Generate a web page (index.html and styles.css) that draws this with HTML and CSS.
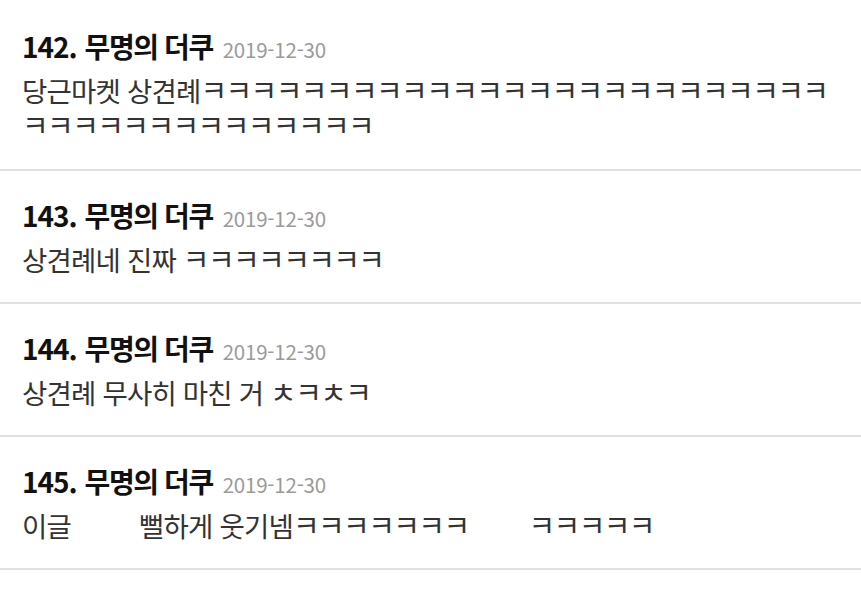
FILE: index.html
```html
<!DOCTYPE html>
<html lang="ko">
    <head>
        <meta charset="utf-8">
        <title>댓글</title>
        <meta name="viewport" content="width=device-width, initial-scale=1">
        <link rel="stylesheet" href="styles.css">
    </head>
    <body>
        <ul class="comments">
            <li class="comment first">
                <p class="meta"><b>142.</b> <strong>무명의 더쿠</strong> <span class="date">2019-12-30</span></p>
                <p class="text">당근마켓 상견례<span class="lol">ㅋㅋㅋㅋㅋㅋㅋㅋㅋㅋㅋㅋㅋㅋㅋㅋㅋㅋㅋㅋㅋㅋㅋㅋㅋㅋㅋㅋㅋㅋㅋㅋㅋㅋㅋㅋㅋㅋㅋ</span></p>
            </li>
            <li class="comment">
                <p class="meta"><b>143.</b> <strong>무명의 더쿠</strong> <span class="date">2019-12-30</span></p>
                <p class="text">상견례네 진짜 <span class="lol">ㅋㅋㅋㅋㅋㅋㅋㅋ</span></p>
            </li>
            <li class="comment">
                <p class="meta"><b>144.</b> <strong>무명의 더쿠</strong> <span class="date">2019-12-30</span></p>
                <p class="text">상견례 무사히 마친 거 <span class="lol">ㅊㅋㅊㅋ</span></p>
            </li>
            <li class="comment">
                <p class="meta"><b>145.</b> <strong>무명의 더쿠</strong> <span class="date">2019-12-30</span></p>
                <p class="text">이글<span class="blank wide"></span>뻘하게 웃기넴<span class="lol">ㅋㅋㅋㅋㅋㅋㅋ</span><span class="blank"></span><span class="lol">ㅋㅋㅋㅋㅋ</span></p>
            </li>
        </ul>
    </body>
</html>
```

FILE: styles.css
```css
:root {
    --color-text: #333;
    --color-title: #111;
    --color-date: #9a9a9a;
    --color-line: #e0e0e0;
    --padding-X: 22px;
}
* { padding: 0; margin: 0; box-sizing: border-box; }
body { background: #fff; font-family: "Noto Sans CJK KR", "Noto Sans", sans-serif; color: var(--color-text); }
.comments { list-style: none; }
.comment { padding: 29px var(--padding-X) 25px var(--padding-X); border-bottom: 2px solid var(--color-line); }
.comment.first { padding-top: 31px; padding-bottom: 26px; }
.meta { font-size: 28px; line-height: 30px; color: var(--color-title); white-space: nowrap; }
.meta b, .meta strong { font-weight: 700; line-height: 1; }
.meta b { letter-spacing: -1px; }
.meta strong { letter-spacing: -1.4px; }
.date { font-size: 20.5px; line-height: 1; color: var(--color-date); letter-spacing: -0.2px; margin-left: 2px; }
.text { margin-top: 12px; font-size: 27.5px; line-height: 35px; letter-spacing: -0.8px; word-break: break-all; }
.lol { font-size: 29px; letter-spacing: -1.6px; line-height: 1; }
.blank { display: inline-block; width: 60px; }
.blank.wide { width: 68px; }
```
